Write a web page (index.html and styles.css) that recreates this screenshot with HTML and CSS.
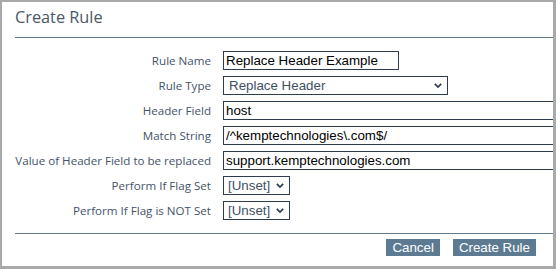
FILE: index.html
```html
<!DOCTYPE html>
<html>
<head>
<meta charset="utf-8">
<link rel="stylesheet" href="styles.css">
</head>
<body>
<div class="frame">
  <div class="title">Create Rule</div>
  <form class="form">
    <label class="lbl">Rule Name</label>
    <div class="ctl"><input class="txt short" type="text" value="Replace Header Example"></div>

    <label class="lbl">Rule Type</label>
    <div class="ctl"><span class="sel-wrap wide"><select class="sel"><option>Replace Header</option></select><svg class="chev" viewBox="0 0 8 5" width="8" height="5"><path d="M0.8 0.8 L4 4 L7.2 0.8" fill="none" stroke="#2c3b4c" stroke-width="1.7"/></svg></span></div>

    <label class="lbl">Header Field</label>
    <div class="ctl"><input class="txt long" type="text" value="host"></div>

    <label class="lbl">Match String</label>
    <div class="ctl"><input class="txt long" type="text" value="/^kemptechnologies\.com$/"></div>

    <label class="lbl">Value of Header Field to be replaced</label>
    <div class="ctl"><input class="txt long" type="text" value="support.kemptechnologies.com"></div>

    <label class="lbl">Perform If Flag Set</label>
    <div class="ctl"><span class="sel-wrap small"><select class="sel"><option>[Unset]</option></select><svg class="chev" viewBox="0 0 8 5" width="8" height="5"><path d="M0.8 0.8 L4 4 L7.2 0.8" fill="none" stroke="#2c3b4c" stroke-width="1.7"/></svg></span></div>

    <label class="lbl">Perform If Flag is NOT Set</label>
    <div class="ctl"><span class="sel-wrap small"><select class="sel"><option>[Unset]</option></select><svg class="chev" viewBox="0 0 8 5" width="8" height="5"><path d="M0.8 0.8 L4 4 L7.2 0.8" fill="none" stroke="#2c3b4c" stroke-width="1.7"/></svg></span></div>
  </form>
  <div class="footer">
    <button class="btn" type="button">Cancel</button>
    <button class="btn" type="button">Create Rule</button>
  </div>
</div>
</body>
</html>
```

FILE: styles.css
```css
html, body {
  margin: 0;
  padding: 0;
  background: #ffffff;
}

.frame {
  width: 556px;
  height: 269px;
  box-sizing: border-box;
  border: 2px solid #a9a9a9;
  border-right-width: 3px;
  border-bottom-width: 3px;
  padding-left: 13px;
  overflow: hidden;
  background: #ffffff;
}

.title {
  font-family: "Open Sans", sans-serif;
  font-size: 16.3px;
  line-height: 20px;
  color: #4a5868;
  padding-top: 5px;
  padding-bottom: 10px;
  border-bottom: 1px solid #61798b;
}

.form {
  display: grid;
  grid-template-columns: 197px auto;
  column-gap: 12px;
  row-gap: 6px;
  margin: 13px 0 0 -1px;
  align-items: center;
}

.lbl {
  font-family: "Open Sans", sans-serif;
  font-size: 11.6px;
  color: #44536a;
  text-align: right;
  white-space: nowrap;
  direction: rtl;
  unicode-bidi: plaintext;
}

.ctl {
  display: flex;
  height: 19px;
}

.txt {
  box-sizing: border-box;
  height: 19px;
  margin: 0;
  border: 1px solid #2e3d4e;
  border-radius: 0;
  padding: 0 2px;
  font-family: "Liberation Sans", Arial, sans-serif;
  font-size: 13.33px;
  color: #000000;
  background: #ffffff;
  outline: none;
}

.short {
  width: 176px;
}

.long {
  width: 360px;
}

.sel-wrap {
  position: relative;
  display: block;
  height: 19px;
}

.sel-wrap.wide {
  width: 225px;
}

.sel-wrap.small {
  width: 67px;
}

.sel {
  -webkit-appearance: none;
  appearance: none;
  box-sizing: border-box;
  width: 100%;
  height: 19px;
  margin: 0;
  border: 1px solid #2e3d4e;
  border-radius: 0;
  padding: 0 0 0 5px;
  font-family: "Liberation Sans", Arial, sans-serif;
  font-size: 13.33px;
  color: #3e5063;
  background: #ffffff;
}

.sel-wrap.small .sel {
  padding-left: 4px;
}

.chev {
  position: absolute;
  right: 6px;
  top: 7px;
  pointer-events: none;
}

.footer {
  display: flex;
  justify-content: flex-end;
  gap: 13px;
  margin-top: 13px;
  padding-top: 5px;
  padding-right: 17px;
  border-top: 1px solid #61798b;
}

.btn {
  height: 17px;
  margin: 0;
  padding: 0 6px;
  border: none;
  border-radius: 0;
  background: #5c7b93;
  color: #ffffff;
  font-family: "Liberation Sans", Arial, sans-serif;
  font-size: 13.33px;
  line-height: 17px;
}
```
